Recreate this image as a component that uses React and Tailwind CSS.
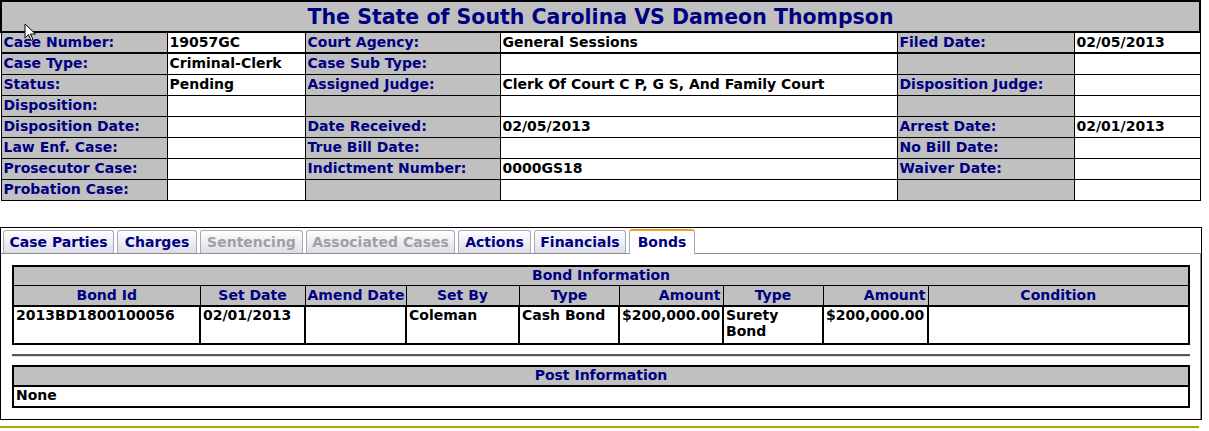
const caseRows = [
  ['Case Number:', '19057GC', 'Court Agency:', 'General Sessions', 'Filed Date:', '02/05/2013'],
  ['Case Type:', 'Criminal-Clerk', 'Case Sub Type:', '', '', ''],
  ['Status:', 'Pending', 'Assigned Judge:', 'Clerk Of Court C P, G S, And Family Court', 'Disposition Judge:', ''],
  ['Disposition:', '', '', '', '', ''],
  ['Disposition Date:', '', 'Date Received:', '02/05/2013', 'Arrest Date:', '02/01/2013'],
  ['Law Enf. Case:', '', 'True Bill Date:', '', 'No Bill Date:', ''],
  ['Prosecutor Case:', '', 'Indictment Number:', '0000GS18', 'Waiver Date:', ''],
  ['Probation Case:', '', '', '', '', ''],
];

const tabs = [
  { name: 'Case Parties', w: 'w-[111px]' },
  { name: 'Charges', w: 'w-[80px]' },
  { name: 'Sentencing', w: 'w-[103px]', disabled: true },
  { name: 'Associated Cases', w: 'w-[149px]', disabled: true },
  { name: 'Actions', w: 'w-[73px]' },
  { name: 'Financials', w: 'w-[92px]' },
];

const label = 'bg-[#c0c0c0] text-[#000080] border border-black px-[2px] py-0 text-left align-middle leading-[17px] whitespace-nowrap';
const value = 'bg-white text-black border border-black px-[2px] py-0 text-left align-middle leading-[17px] whitespace-nowrap';
const th = 'bg-[#c0c0c0] text-[#000080] border border-black px-[2px] py-0 h-[20px] leading-[17px] text-center whitespace-nowrap';
const td = 'bg-white text-black border-2 border-black px-[2px] py-0 align-top leading-[16px] text-left';

const Cursor = () => (
  <svg className="absolute left-[24px] top-[23px]" width="14" height="20" viewBox="0 0 14 20">
    <path d="M1 1 L1 15 L4.5 11.5 L7 17.5 L9 16.5 L6.5 11 L11.5 11 Z" fill="#fff" stroke="#000" strokeWidth="1" />
  </svg>
);

const App = () => {
  return (
    <div className="relative w-[1209px] h-[431px] bg-white overflow-hidden font-['DejaVu_Sans',Verdana,sans-serif] font-bold text-[14px]">
      <table className="w-[1199px] border-collapse border border-black table-fixed">
        <colgroup>
          <col className="w-[166px]" />
          <col className="w-[138px]" />
          <col className="w-[195px]" />
          <col className="w-[397px]" />
          <col className="w-[177px]" />
          <col className="w-[126px]" />
        </colgroup>
        <tbody>
          <tr className="h-[31px]">
            <td colSpan={6} className="bg-[#c0c0c0] text-[#000080] border-2 border-black text-center text-[20.5px] leading-[25px] p-0 pt-[2px]">
              The State of South Carolina VS Dameon Thompson
            </td>
          </tr>
          {caseRows.map((row, i) => (
            <tr key={i} className={i === 0 ? 'h-[21px] border-b-2 border-black' : 'h-[21px]'}>
              <td className={label}>{row[0]}</td>
              <td className={value}>{row[1]}</td>
              <td className={label}>{row[2]}</td>
              <td className={value}>{row[3]}</td>
              <td className={label}>{row[4]}</td>
              <td className={value}>{row[5]}</td>
            </tr>
          ))}
        </tbody>
      </table>

      <div className="mt-[26px] w-[1202px] h-[193px] border border-black flex flex-col">
        <div className="flex items-end gap-[3px] pl-[2px] h-[25px]">
          {tabs.map((t) => (
            <div
              key={t.name}
              className={`${t.w} h-[23px] rounded-t-[3px] border border-b-0 border-[#a8a8b8] bg-gradient-to-b from-white to-[#dcdce8] flex items-center justify-center leading-[16px] ${
                t.disabled ? 'text-[#a0a0a0]' : 'text-[#000080]'
              }`}
            >
              {t.name}
            </div>
          ))}
          <div className="w-[66px] h-[25px] rounded-t-[3px] border border-b-0 border-[#a8a8b8] border-t-2 border-t-[#f0a030] bg-white text-[#000080] flex items-center justify-center leading-[16px] -mb-px relative">
            Bonds
          </div>
        </div>
        <div className="flex-1 border-t border-r border-[#909090] px-[11px] pt-[11px]">
          <table className="w-[1178px] border-collapse border-2 border-black table-fixed">
            <colgroup>
              <col className="w-[187px]" />
              <col className="w-[105px]" />
              <col className="w-[101px]" />
              <col className="w-[113px]" />
              <col className="w-[100px]" />
              <col className="w-[104px]" />
              <col className="w-[100px]" />
              <col className="w-[105px]" />
              <col />
            </colgroup>
            <tbody>
              <tr>
                <td colSpan={9} className={th}>Bond Information</td>
              </tr>
              <tr>
                <td className={th}>Bond Id</td>
                <td className={th}>Set Date</td>
                <td className={th}>Amend Date</td>
                <td className={th}>Set By</td>
                <td className={th}>Type</td>
                <td className={`${th} text-right`}>Amount</td>
                <td className={th}>Type</td>
                <td className={`${th} text-right`}>Amount</td>
                <td className={th}>Condition</td>
              </tr>
              <tr className="h-[38px]">
                <td className={td}>2013BD1800100056</td>
                <td className={td}>02/01/2013</td>
                <td className={td}></td>
                <td className={td}>Coleman</td>
                <td className={td}>Cash Bond</td>
                <td className={td}>$200,000.00</td>
                <td className={td}>Surety<br />Bond</td>
                <td className={td}>$200,000.00</td>
                <td className={td}></td>
              </tr>
            </tbody>
          </table>

          <div className="mt-[9px] mb-[8px] w-[1178px] border-t-2 border-t-[#555] border-b border-b-[#ddd]" />

          <table className="w-[1178px] border-collapse border-2 border-black">
            <tbody>
              <tr>
                <td className={th}>Post Information</td>
              </tr>
              <tr>
                <td className={`${td} h-[21px]`}>None</td>
              </tr>
            </tbody>
          </table>
        </div>
      </div>

      <div className="mt-[6px] w-[1199px] h-[2px] bg-[#a8a800]" />
      <Cursor />
    </div>
  );
};

export default App;
